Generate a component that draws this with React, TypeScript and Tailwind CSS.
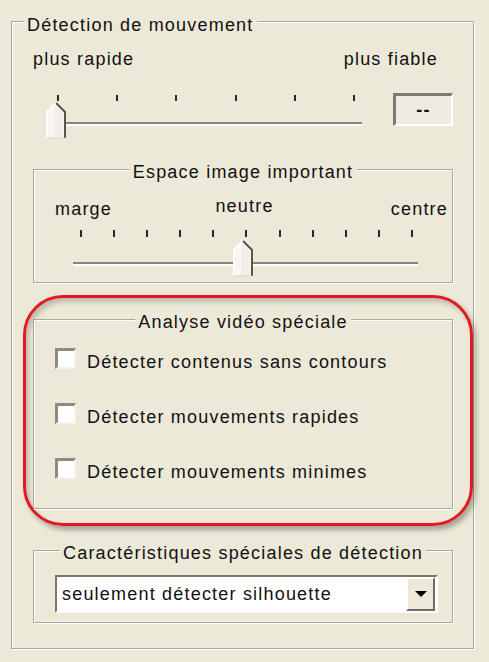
import clsx from "clsx";
import type { ReactNode } from "react";

const baseText =
  "font-['Liberation_Sans',Arial,sans-serif] text-[18px] leading-[18px] tracking-[1.2px] text-[#111]";

interface GroupBoxProps {
  title: string;
  titleClass?: string;
  className?: string;
  children: ReactNode;
}

function GroupBox({ title, titleClass, className, children }: GroupBoxProps) {
  return (
    <div
      className={clsx(
        "relative border border-[#aca899] shadow-[inset_1px_1px_0_#fff,1px_1px_0_#fff]",
        className,
      )}
    >
      <span
        className={clsx(
          "absolute whitespace-nowrap bg-[#ece9d8] px-[3px]",
          titleClass ?? "left-1/2 top-[-7px] -translate-x-1/2",
        )}
      >
        {title}
      </span>
      {children}
    </div>
  );
}

function Thumb({ className }: { className?: string }) {
  return (
    <svg width="21" height="37" viewBox="0 0 21 37" className={clsx("absolute", className)}>
      <polygon points="1,10 10,1 19,10 19,36 1,36" fill="#f7f6f1" />
      <polygon points="9,4 17,11 17,35 9,35" fill="#ebe9df" opacity="0.6" />
      <polyline points="1,36 1,10 10,1" fill="none" stroke="#ffffff" strokeWidth="2" />
      <polyline points="10,1 19,10 19,36" fill="none" stroke="#57554c" strokeWidth="2" />
      <line x1="1" y1="36" x2="19" y2="36" stroke="#d6d4c8" strokeWidth="1" />
    </svg>
  );
}

interface SliderProps {
  ticks: number;
  className: string;
  tickRowClass: string;
  tickClass: string;
  trackClass: string;
  thumbClass: string;
}

function Slider({ ticks, className, tickRowClass, tickClass, trackClass, thumbClass }: SliderProps) {
  return (
    <div className={clsx("relative", className)}>
      <div className={clsx("flex justify-between", tickRowClass)}>
        {Array.from({ length: ticks }, (_, i) => (
          <span key={i} className={clsx("w-[2px] bg-[#2a2a2a]", tickClass)} />
        ))}
      </div>
      <div className={clsx("ml-[3px] flex flex-col", trackClass)}>
        <span className="h-[2px] bg-[#85837a]" />
        <span className="h-[2px] bg-white" />
      </div>
      <Thumb className={thumbClass} />
    </div>
  );
}

function CheckRow({ label, className }: { label: string; className?: string }) {
  return (
    <div className={clsx("ml-[21px] flex items-start", className)}>
      <span className="h-[21px] w-[21px] border-t-[3px] border-l-[3px] border-b-2 border-r-2 border-t-[#8d8b80] border-l-[#8d8b80] border-b-[#f4f3ee] border-r-[#f4f3ee] bg-white" />
      <span className="ml-[11px] mt-[5px]">{label}</span>
    </div>
  );
}

export default function App() {
  return (
    <div className={clsx("h-[662px] w-[489px] overflow-hidden bg-[#ece9d8] pt-[21px]", baseText)}>
      <GroupBox
        title="Détection de mouvement"
        titleClass="left-[12px] top-[-6px]"
        className="ml-[11px] h-[628px] w-[463px]"
      >
        <div className="mt-[28px] flex justify-between pl-[21px] pr-[35px]">
          <span>plus rapide</span>
          <span>plus fiable</span>
        </div>

        <div className="mt-[25px] flex items-start">
          <Slider
            ticks={6}
            className="ml-[35px] mt-[2px] h-[45px] w-[315px]"
            tickRowClass="pl-[10px] pr-[7px]"
            tickClass="h-[6px]"
            trackClass="mt-[21px]"
            thumbClass="left-[-1px] top-[7px]"
          />
          <div className="ml-[31px] flex h-[33px] w-[60px] items-center justify-center border-t-[3px] border-l-[3px] border-b-2 border-r-2 border-t-[#7d7b6e] border-l-[#7d7b6e] border-b-white border-r-white bg-[#eeece2] font-bold">
            --
          </div>
        </div>

        <GroupBox title="Espace image important" className="ml-[21px] mt-[29px] h-[114px] w-[420px]">
          <div className="ml-[21px] mr-[4px] mt-[27px] grid grid-cols-[1fr_auto_1fr] items-start">
            <span className="mt-[3px]">marge</span>
            <span className="pr-[14px]">neutre</span>
            <span className="mt-[3px] text-right">centre</span>
          </div>
          <Slider
            ticks={11}
            className="ml-[36px] mt-[12px] h-[48px] w-[348px]"
            tickRowClass="pl-[10px] pr-[5px]"
            tickClass="h-[7px]"
            trackClass="mt-[25px]"
            thumbClass="left-[163px] top-[10px]"
          />
        </GroupBox>

        <div className="ml-[11px] mt-[12px] w-[450px] rounded-[40px] border-[3px] border-[#e3191f] pb-[14px] pl-[7px] pt-[21px] shadow-[3px_4px_5px_rgba(0,0,0,0.3),inset_3px_4px_5px_rgba(0,0,0,0.2)]">
          <GroupBox title="Analyse vidéo spéciale" className="h-[190px] w-[420px]">
            <CheckRow label="Détecter contenus sans contours" className="mt-[28px]" />
            <CheckRow label="Détecter mouvements rapides" className="mt-[32px]" />
            <CheckRow label="Détecter mouvements minimes" className="mt-[32px]" />
          </GroupBox>
        </div>

        <GroupBox
          title="Caractéristiques spéciales de détection"
          className="ml-[21px] mt-[24px] h-[73px] w-[420px]"
        >
          <div className="ml-[21px] mt-[24px] flex h-[38px] w-[383px] items-stretch border-2 border-t-[#7a786c] border-l-[#7a786c] border-b-white border-r-white bg-white">
            <span className="flex flex-1 items-center pl-[5px]">seulement détecter silhouette</span>
            <span className="mr-[1px] flex w-[29px] items-center justify-center border-2 border-t-white border-l-white border-b-[#716f64] border-r-[#716f64] bg-[#ece9d8]">
              <span className="h-0 w-0 border-x-[6px] border-t-[6px] border-x-transparent border-t-black" />
            </span>
          </div>
        </GroupBox>
      </GroupBox>
    </div>
  );
}
